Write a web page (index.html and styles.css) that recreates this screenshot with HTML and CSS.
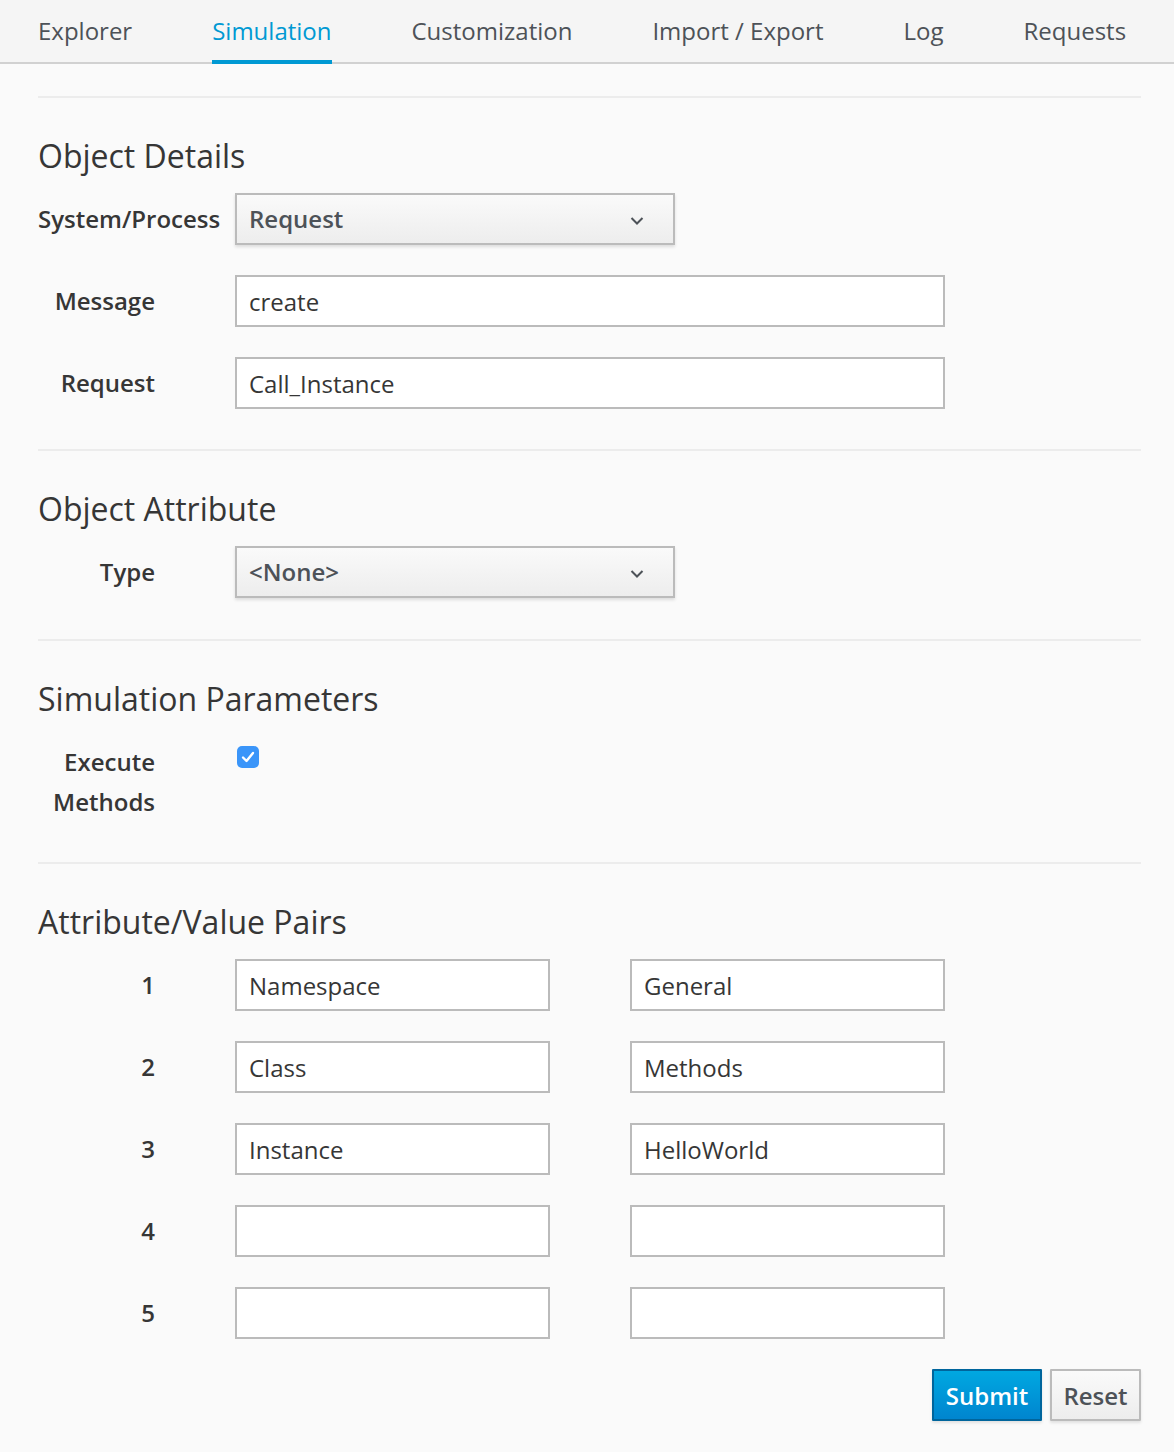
FILE: index.html
```html
<!DOCTYPE html>
<html>
<head>
<meta charset="utf-8">
<link rel="stylesheet" href="styles.css">
</head>
<body>
<nav class="tabs">
  <a class="tab">Explorer</a>
  <a class="tab active">Simulation</a>
  <a class="tab">Customization</a>
  <a class="tab">Import / Export</a>
  <a class="tab">Log</a>
  <a class="tab">Requests</a>
</nav>
<main class="content">
  <section class="section">
    <h3 class="heading">Object Details</h3>
    <div class="row">
      <label class="label">System/Process</label>
      <div class="select w-select"><span class="select-text">Request</span><svg class="chev" width="14" height="10" viewBox="0 0 14 10"><path d="M1.5 2 L7 7.5 L12.5 2" fill="none" stroke="#4d5258" stroke-width="2"/></svg></div>
    </div>
    <div class="row">
      <label class="label">Message</label>
      <div class="input w-full">create</div>
    </div>
    <div class="row">
      <label class="label">Request</label>
      <div class="input w-full">Call_Instance</div>
    </div>
  </section>
  <section class="section section-attr">
    <h3 class="heading">Object Attribute</h3>
    <div class="row">
      <label class="label">Type</label>
      <div class="select w-select"><span class="select-text">&lt;None&gt;</span><svg class="chev" width="14" height="10" viewBox="0 0 14 10"><path d="M1.5 2 L7 7.5 L12.5 2" fill="none" stroke="#4d5258" stroke-width="2"/></svg></div>
    </div>
  </section>
  <section class="section">
    <h3 class="heading">Simulation Parameters</h3>
    <div class="row row-check">
      <label class="label label-wrap">Execute Methods</label>
      <span class="checkbox"><svg width="22" height="22" viewBox="0 0 22 22"><rect x="0" y="0" width="22" height="22" rx="5" fill="#3a95f9"/><path d="M6 11.5 L9.5 15 L16 7" fill="none" stroke="#fff" stroke-width="2.4" stroke-linecap="round" stroke-linejoin="round"/></svg></span>
    </div>
  </section>
  <section class="section">
    <h3 class="heading">Attribute/Value Pairs</h3>
    <div class="row">
      <label class="label">1</label>
      <div class="pair"><div class="input">Namespace</div><div class="input">General</div></div>
    </div>
    <div class="row">
      <label class="label">2</label>
      <div class="pair"><div class="input">Class</div><div class="input">Methods</div></div>
    </div>
    <div class="row">
      <label class="label">3</label>
      <div class="pair"><div class="input">Instance</div><div class="input">HelloWorld</div></div>
    </div>
    <div class="row">
      <label class="label">4</label>
      <div class="pair"><div class="input"></div><div class="input"></div></div>
    </div>
    <div class="row">
      <label class="label">5</label>
      <div class="pair"><div class="input"></div><div class="input"></div></div>
    </div>
    <div class="actions">
      <button class="btn btn-primary">Submit</button>
      <button class="btn btn-default">Reset</button>
    </div>
  </section>
</main>
</body>
</html>
```

FILE: styles.css
```css
html, body {
  margin: 0;
  padding: 0;
}
body {
  background: #fafafa;
  font-family: "Open Sans", "Noto Sans", sans-serif;
  font-size: 24px;
  color: #363636;
  width: 1174px;
  height: 1452px;
  overflow: hidden;
}
.tabs {
  display: flex;
  gap: 80px;
  padding: 0 38px;
  height: 62px;
  background: #f5f5f5;
  border-bottom: 2px solid #d1d1d1;
}
.tab {
  display: block;
  height: 60px;
  line-height: 62px;
  color: #4d5258;
  font-size: 24px;
  border-bottom: 4px solid transparent;
  margin-bottom: -2px;
  box-sizing: content-box;
  white-space: nowrap;
}
.tab.active {
  color: #0099d3;
  border-bottom-color: #0099d3;
}
.content {
  padding: 32px 33px 0 38px;
}
.section {
  border-top: 2px solid #ececec;
  padding-top: 1px;
}
.heading {
  font-size: 32px;
  font-weight: 400;
  line-height: 35px;
  margin: 39px 0 20px;
  color: #363636;
}
.row {
  display: grid;
  grid-template-columns: 117px 1fr;
  column-gap: 80px;
  margin-bottom: 30px;
  align-items: start;
}
.row:last-of-type {
  margin-bottom: 40px;
}
.section-attr .row:last-of-type {
  margin-bottom: 41px;
}
.label {
  text-align: right;
  font-weight: 600;
  line-height: 40px;
  padding-top: 6px;
  white-space: nowrap;
  color: #363636;
}
.label-wrap {
  white-space: normal;
}
.input {
  box-sizing: border-box;
  height: 52px;
  border: 2px solid #bbbbbb;
  background: #fff;
  padding: 0 12px;
  line-height: 50px;
  color: #363636;
}
.w-full {
  width: 710px;
}
.w-select {
  width: 440px;
}
.select {
  box-sizing: border-box;
  height: 52px;
  border: 2px solid #bbbbbb;
  background: linear-gradient(#fafafa, #ededed);
  box-shadow: 0 2px 3px rgba(3, 3, 3, 0.12);
  padding: 0 12px;
  display: flex;
  align-items: center;
  justify-content: space-between;
  color: #4d5258;
  font-weight: 600;
}
.select-text {
  line-height: 50px;
}
.chev {
  margin-right: 17px;
  margin-top: 4px;
}
.pair {
  display: grid;
  grid-template-columns: 315px 315px;
  column-gap: 80px;
}
.checkbox {
  display: block;
  width: 22px;
  height: 22px;
  margin-top: 10px;
  margin-left: 2px;
}
.checkbox svg {
  display: block;
}
.actions {
  display: flex;
  justify-content: flex-end;
  gap: 8px;
  margin-top: 1px;
}
.btn {
  box-sizing: border-box;
  height: 52px;
  font-family: "Open Sans", "Noto Sans", sans-serif;
  font-size: 24px;
  font-weight: 600;
  padding: 0 10px;
  border: 2px solid;
  border-radius: 1px;
  box-shadow: 0 2px 3px rgba(3, 3, 3, 0.1);
}
.btn-primary {
  width: 110px;
  background: linear-gradient(#00a8e1, #0085cf);
  border-color: #00659c;
  color: #fff;
}
.btn-default {
  width: 91px;
  background: linear-gradient(#fafafa, #ededed);
  border-color: #bbbbbb;
  color: #4d5258;
}
```
